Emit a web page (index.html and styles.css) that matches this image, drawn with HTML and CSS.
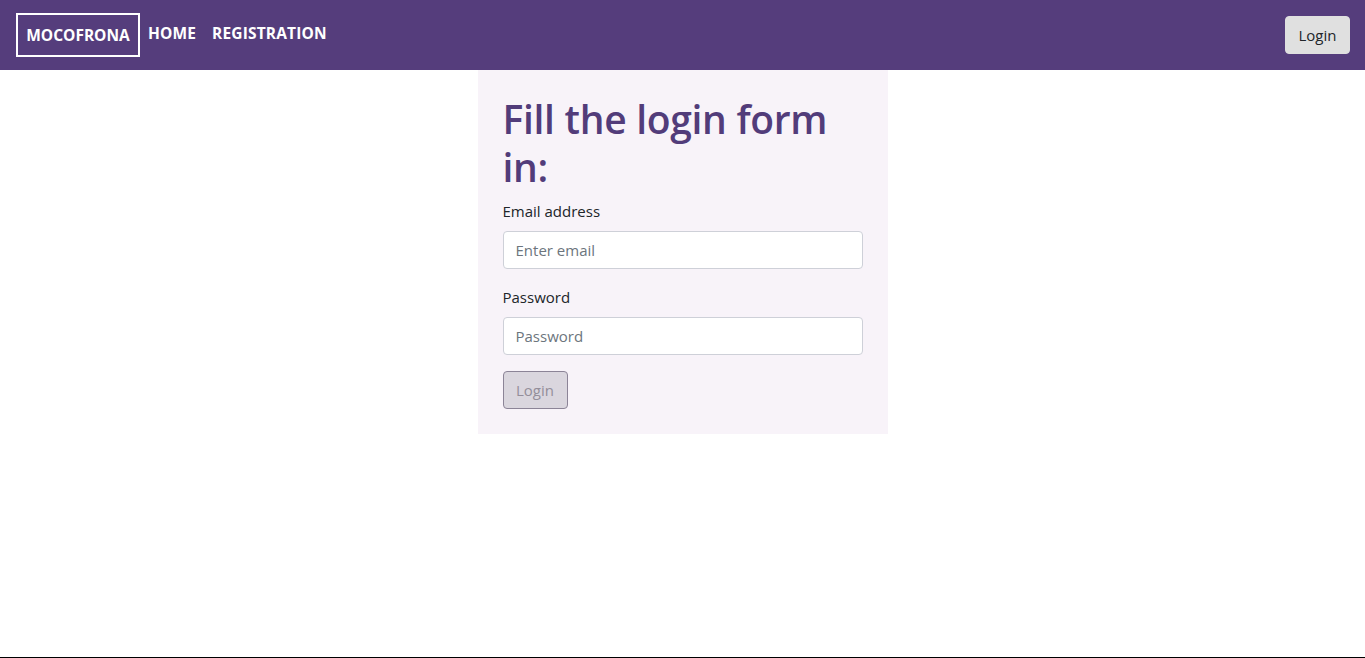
FILE: index.html
```html
<!DOCTYPE html>
<html lang="en">
<head>
<meta charset="utf-8">
<title>Mocofrona - Login</title>
<link rel="stylesheet" href="styles.css">
</head>
<body>
<div class="page">
  <nav class="navbar">
    <div class="nav-left">
      <a class="brand" href="#">MOCOFRONA</a>
      <a class="nav-link" href="#">HOME</a>
      <a class="nav-link" href="#">REGISTRATION</a>
    </div>
    <button class="nav-btn" type="button">Login</button>
  </nav>
  <main class="main">
    <section class="card">
      <h1 class="title">Fill the login form in:</h1>
      <form class="form">
        <div class="group">
          <label class="label" for="email">Email address</label>
          <input class="input" id="email" type="email" placeholder="Enter email">
        </div>
        <div class="group">
          <label class="label" for="pw">Password</label>
          <input class="input" id="pw" type="password" placeholder="Password">
        </div>
        <button class="submit" type="submit" disabled>Login</button>
      </form>
    </section>
  </main>
  <footer class="footer"></footer>
</div>
</body>
</html>
```
FILE: styles.css
```css
* { box-sizing: border-box; }
html, body { margin: 0; padding: 0; }
body {
  font-family: "Open Sans", "Noto Sans", sans-serif;
  font-size: 16px;
  color: #212529;
  background: #fff;
}
.page {
  min-height: 100vh;
  display: flex;
  flex-direction: column;
}
.navbar {
  height: 70px;
  background: #553d7c;
  display: flex;
  align-items: center;
  justify-content: space-between;
  padding: 0 15px 0 16px;
}
.nav-left {
  display: flex;
  align-items: center;
}
.brand {
  display: flex;
  align-items: center;
  justify-content: center;
  width: 124px;
  height: 44px;
  border: 2px solid #fff;
  color: #fff;
  text-decoration: none;
  font-weight: 700;
  font-size: 15.5px;
  margin-right: 8px;
}
.nav-link {
  color: #fff;
  text-decoration: none;
  font-weight: 700;
  font-size: 15.5px;
  letter-spacing: 0.15px;
  margin-right: 16px;
  position: relative;
  top: -2px;
}
.nav-btn {
  height: 38px;
  width: 65px;
  background: #e0e0e0;
  border: 1px solid #e0e0e0;
  border-radius: 4px;
  font-family: inherit;
  font-size: 15px;
  color: #212529;
}
.main {
  flex: 1;
  display: flex;
  justify-content: center;
  align-items: flex-start;
}
.card {
  width: 410px;
  background: #f8f3f9;
  padding: 25px;
}
.title {
  margin: 0 0 8px;
  font-size: 39px;
  line-height: 48px;
  font-weight: 600;
  color: #523c7a;
  letter-spacing: -0.3px;
}
.form { display: flex; flex-direction: column; }
.group {
  display: flex;
  flex-direction: column;
  margin-bottom: 16px;
}
.label {
  font-size: 15px;
  line-height: 24px;
  margin-bottom: 8px;
  color: #212529;
}
.input {
  height: 38px;
  width: 360px;
  padding: 6px 12px;
  font-family: inherit;
  font-size: 15px;
  border: 1px solid #ced0d8;
  border-radius: 4px;
  background: #fff;
  color: #495057;
}
.input::placeholder { color: #6c757d; }
.submit {
  align-self: flex-start;
  height: 38px;
  width: 65px;
  font-family: inherit;
  font-size: 15px;
  color: #948e9a;
  background: #dad6de;
  border: 1px solid #8c8497;
  border-radius: 4px;
}
.footer {
  height: 1px;
  background: #000;
}
```
